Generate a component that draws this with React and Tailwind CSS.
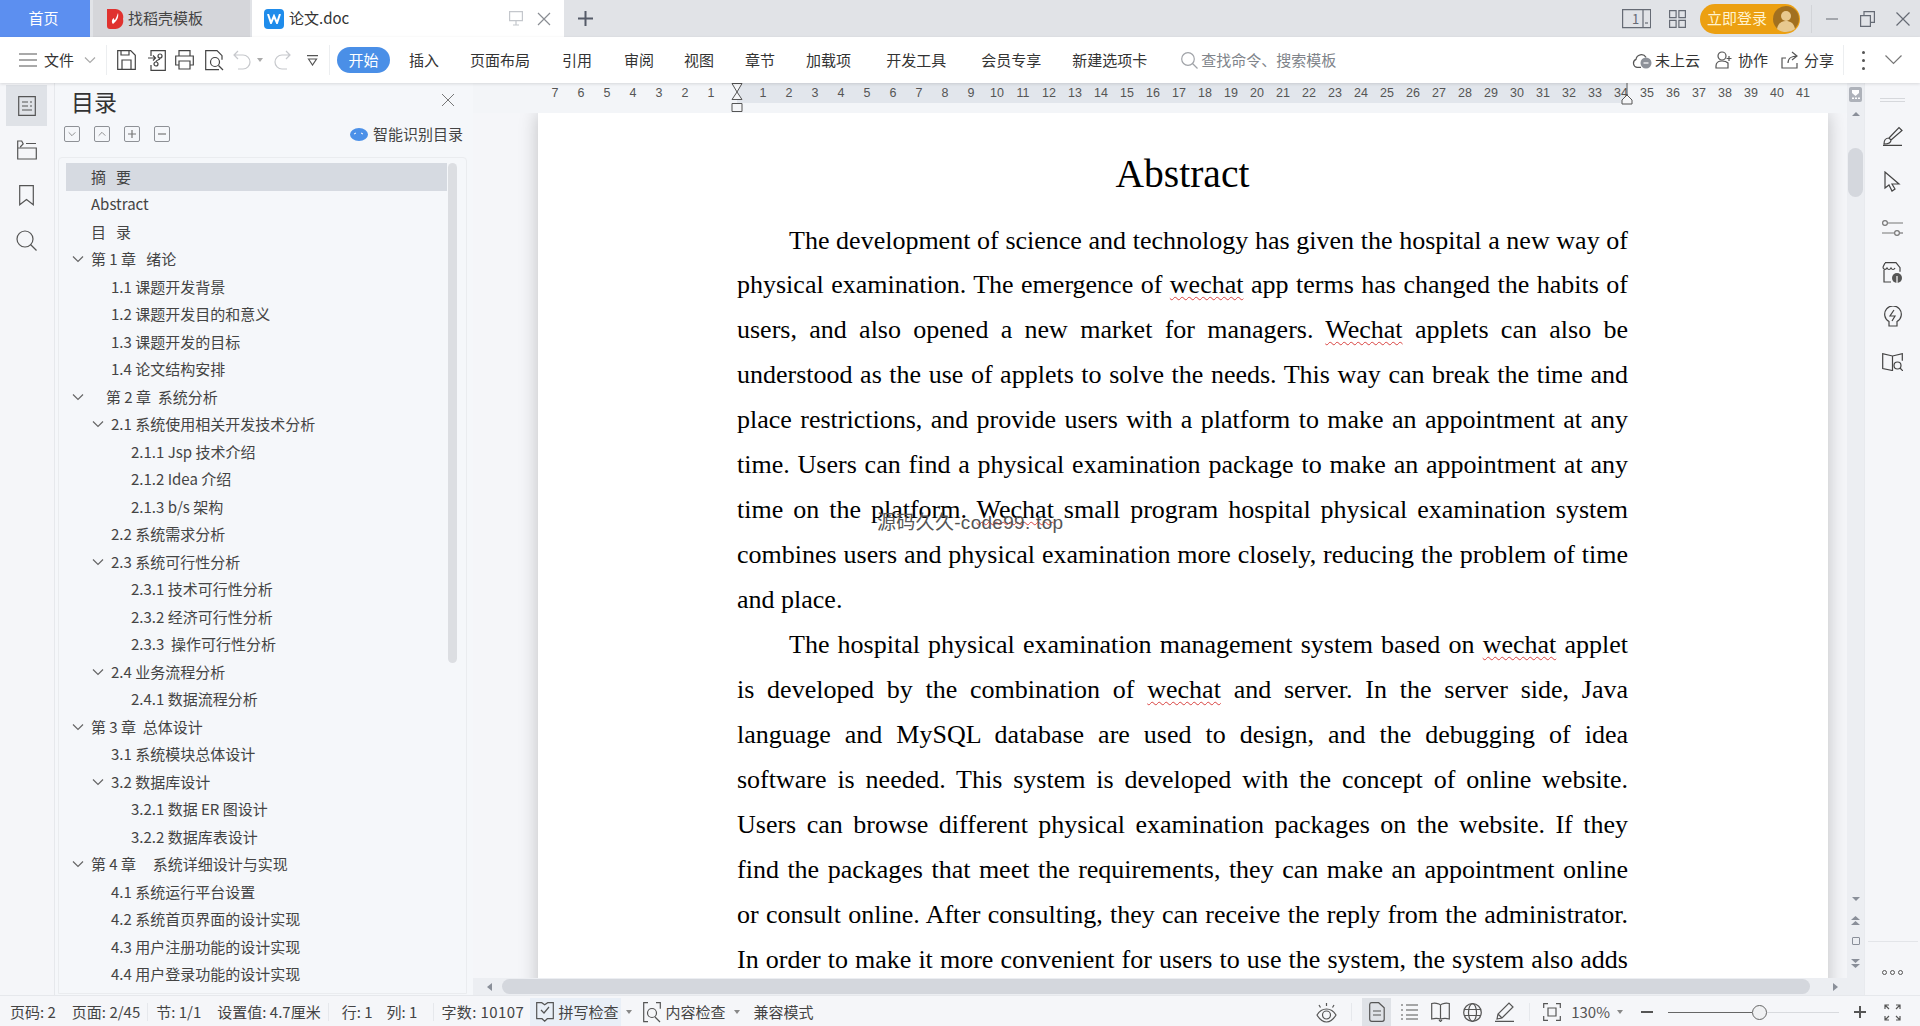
import { Fragment } from 'react';

const tocRows = [
  { t: '摘   要', x: 91, active: true },
  { t: 'Abstract', x: 91 },
  { t: '目   录', x: 91 },
  { t: '第 1 章   绪论', x: 91, c: 78 },
  { t: '1.1 课题开发背景', x: 111 },
  { t: '1.2 课题开发目的和意义', x: 111 },
  { t: '1.3 课题开发的目标', x: 111 },
  { t: '1.4 论文结构安排', x: 111 },
  { t: '第 2 章  系统分析', x: 106, c: 78 },
  { t: '2.1 系统使用相关开发技术分析', x: 111, c: 98 },
  { t: '2.1.1 Jsp 技术介绍', x: 131 },
  { t: '2.1.2 Idea 介绍', x: 131 },
  { t: '2.1.3 b/s 架构', x: 131 },
  { t: '2.2 系统需求分析', x: 111 },
  { t: '2.3 系统可行性分析', x: 111, c: 98 },
  { t: '2.3.1 技术可行性分析', x: 131 },
  { t: '2.3.2 经济可行性分析', x: 131 },
  { t: '2.3.3  操作可行性分析', x: 131 },
  { t: '2.4 业务流程分析', x: 111, c: 98 },
  { t: '2.4.1 数据流程分析', x: 131 },
  { t: '第 3 章  总体设计', x: 91, c: 78 },
  { t: '3.1 系统模块总体设计', x: 111 },
  { t: '3.2 数据库设计', x: 111, c: 98 },
  { t: '3.2.1 数据 ER 图设计', x: 131 },
  { t: '3.2.2 数据库表设计', x: 131 },
  { t: '第 4 章     系统详细设计与实现', x: 91, c: 78 },
  { t: '4.1 系统运行平台设置', x: 111 },
  { t: '4.2 系统首页界面的设计实现', x: 111 },
  { t: '4.3 用户注册功能的设计实现', x: 111 },
  { t: '4.4 用户登录功能的设计实现', x: 111 },
];

const bodyLines = [
  { t: 'The development of science and technology has given the hospital a new way of', indent: true },
  { t: 'physical examination. The emergence of wechat app terms has changed the habits of' },
  { t: 'users, and also opened a new market for managers. Wechat applets can also be' },
  { t: 'understood as the use of applets to solve the needs. This way can break the time and' },
  { t: 'place restrictions, and provide users with a platform to make an appointment at any' },
  { t: 'time. Users can find a physical examination package to make an appointment at any' },
  { t: 'time on the platform. Wechat small program hospital physical examination system' },
  { t: 'combines users and physical examination more closely, reducing the problem of time' },
  { t: 'and place.', last: true },
  { t: 'The hospital physical examination management system based on wechat applet', indent: true },
  { t: 'is developed by the combination of wechat and server. In the server side, Java' },
  { t: 'language and MySQL database are used to design, and the debugging of idea' },
  { t: 'software is needed. This system is developed with the concept of online website.' },
  { t: 'Users can browse different physical examination packages on the website. If they' },
  { t: 'find the packages that meet the requirements, they can make an appointment online' },
  { t: 'or consult online. After consulting, they can receive the reply from the administrator.' },
  { t: 'In order to make it more convenient for users to use the system, the system also adds' },
];

const menuTabs = [
  { t: '插入', cls: 'ml-[19px]' },
  { t: '页面布局', cls: 'ml-[31px]' },
  { t: '引用', cls: 'ml-[32px]' },
  { t: '审阅', cls: 'ml-[32px]' },
  { t: '视图', cls: 'ml-[30px]' },
  { t: '章节', cls: 'ml-[31px]' },
  { t: '加载项', cls: 'ml-[31px]' },
  { t: '开发工具', cls: 'ml-[35px]' },
  { t: '会员专享', cls: 'ml-[35px]' },
  { t: '新建选项卡', cls: 'ml-[31px]' },
];

const rulerNums = [];
for (let n = -7; n <= 41; n++) rulerNums.push(n);

function Ic({ w = 20, h = 20, vb, cls = '', children }) {
  return (
    <svg width={w} height={h} viewBox={vb || `0 0 ${w} ${h}`} fill="none" stroke="currentColor" strokeWidth="1.2" className={'shrink-0 ' + cls}>
      {children}
    </svg>
  );
}

const Chevron = ({ size = 12, cls = '' }) => (
  <Ic w={size} h={size} vb="0 0 12 12" cls={cls}><path d="M1 3.5 6 8.5 11 3.5" /></Ic>
);

function TitleBar() {
  return (
    <div className="flex h-[37px] items-center bg-[#e1e3e7] text-[15px]">
      <div className="flex h-full w-[90px] items-center justify-center bg-[#5c8ff0] pr-[3px] text-white">首页</div>
      <div className="ml-[3px] flex h-full w-[157px] items-center bg-[#d5d6da] pl-[13px] text-[#444]">
        <svg width="18" height="22" viewBox="0 0 18 22" className="shrink-0">
          <path d="M1 1h8a8 8 0 0 1 8 10 8 8 0 0 1-8 10H4a3 3 0 0 1-3-3z" fill="#e0322f" />
          <path d="M12 5c1 4-1 8-5 11-2-2-1-5 1-6 0 1 0 2 1 2 1-2 2-4 3-7z" fill="#fff" />
        </svg>
        <span className="ml-[4px]">找稻壳模板</span>
      </div>
      <div className="ml-[2px] flex h-full w-[312px] items-center bg-white pl-[12px] text-[#333]">
        <div className="flex h-[20px] w-[20px] items-center justify-center rounded-[4px] bg-[#1f8ceb]">
          <svg width="14" height="10" viewBox="0 0 14 10" fill="none" stroke="#fff" strokeWidth="2"><path d="M1 0l3 9 3-7 3 7 3-9" /></svg>
        </div>
        <span className="ml-[5px]">论文.doc</span>
        <Ic w={14} h={15} vb="0 0 14 15" cls="ml-auto text-[#c4c7cc]"><path d="M.6.6h12.8v9H.6zM7 9.6v4M4 14h6" /></Ic>
        <Ic w={14} h={14} vb="0 0 14 14" cls="ml-[14px] mr-[13px] text-[#8a8d93]"><path d="M1 1l12 12M13 1 1 13" /></Ic>
      </div>
      <Ic w={15} h={15} vb="0 0 15 15" cls="ml-[14px] text-[#555b68]"><path d="M7.5 0v15M0 7.5h15" strokeWidth="2" /></Ic>

      <Ic w={29} h={20} vb="0 0 29 20" cls="ml-auto text-[#666b75]"><path d="M.6.6h28v18H.6zM21 .6v18" /><text x="10" y="15" fontSize="13" fill="currentColor" stroke="none">1</text><path d="M23 14h3" /></Ic>
      <Ic w={17} h={20} vb="0 0 17 20" cls="ml-[18px] text-[#666b75]"><path d="M.6 1.6h6.5v7H.6zM9.9 1.6h6.5v7H9.9zM.6 11.4h6.5v7H.6zM9.9 11.4h6.5v7H9.9z" /></Ic>
      <div className="relative ml-[14px] flex h-[30px] w-[100px] items-center rounded-full bg-[#eca012] pl-[7px] text-[#fff3cf]">
        立即登录
        <svg width="26" height="26" viewBox="0 0 26 26" className="ml-auto mr-[1px]">
          <circle cx="13" cy="13" r="13" fill="#a2701f" />
          <circle cx="13" cy="10" r="5" fill="#e8c98f" />
          <path d="M4 23c1-6 5-8 9-8s8 2 9 8c-5 4-13 4-18 0z" fill="#e8c98f" />
        </svg>
      </div>
      <div className="ml-[11px] h-[28px] w-px bg-[#d2d4d8]" />
      <Ic w={12} h={2} vb="0 0 12 2" cls="ml-[14px] text-[#7b7e85]"><path d="M0 1h12" /></Ic>
      <Ic w={15} h={16} vb="0 0 15 16" cls="ml-[22px] text-[#666b75]"><path d="M.6 4.6h9.8v10.8H.6zM4 4.6V.6h10.4v10.8h-4" /></Ic>
      <Ic w={14} h={14} vb="0 0 14 14" cls="ml-[21px] mr-[10px] text-[#666b75]"><path d="M.5.5l13 13M13.5.5l-13 13" /></Ic>
    </div>
  );
}

function Toolbar() {
  return (
    <div className="relative z-10 flex h-[46px] items-center bg-white pl-[19px] text-[15px] text-[#333] shadow-[0_1px_3px_rgba(0,0,0,0.12)]">
      <Ic w={18} h={14} vb="0 0 18 14" cls="text-[#555]"><path d="M0 1h18M0 7h18M0 13h18" /></Ic>
      <span className="ml-[7px]">文件</span>
      <Chevron cls="ml-[10px] text-[#aaa]" />
      <div className="ml-[10px] h-[30px] w-px bg-[#eceef0]" />
      {/* save */}
      <Ic w={19} h={20} vb="0 0 19 20" cls="ml-[10px] text-[#444]"><path d="M.7.7h13l4.6 4.6v14H.7zM5 19V10h9v9M4 1v4h8V1" /></Ic>
      {/* save as */}
      <Ic w={18} h={21} vb="0 0 18 21" cls="ml-[12px] text-[#444]"><path d="M3 6V.7h14.3v19.6H3V15M0 8h7M5 5.5 7.5 8 5 10.5" /><circle cx="12" cy="6" r="2" /><circle cx="8" cy="14" r="2" /><path d="M12 8c0 3-4 1-4 4" /></Ic>
      {/* print */}
      <Ic w={19} h={20} vb="0 0 19 20" cls="ml-[9px] text-[#444]"><path d="M4 6V.7h11V6M4 15H.7V6h17.6v9H15M4 11h11v8H4z" /></Ic>
      {/* preview */}
      <Ic w={19} h={21} vb="0 0 19 21" cls="ml-[11px] text-[#444]"><path d="M14 19.7H.7V.7H12l5 5v4" /><circle cx="10" cy="12" r="4.5" /><path d="M13.5 15.5 18 20" /></Ic>
      {/* undo */}
      <Ic w={18} h={20} vb="0 0 18 20" cls="ml-[9px] text-[#c6c8cc]"><path d="M5 1 1 5l4 4M1 5h9a6.5 6.5 0 0 1 0 14H5" /></Ic>
      <div className="ml-[6px] h-0 w-0 border-x-[3px] border-t-[4px] border-x-transparent border-t-[#aaa]" />
      <Ic w={17} h={20} vb="0 0 17 20" cls="ml-[11px] text-[#c6c8cc]"><path d="M12 1l4 4-4 4M16 5H8a7 7 0 0 0 0 14h5" /></Ic>
      <Ic w={11} h={11} vb="0 0 11 11" cls="ml-[16px] text-[#555]"><path d="M0 .6h11M1.5 4 5.5 10 9.5 4z" /></Ic>
      <div className="ml-[11px] h-[30px] w-px bg-[#eceef0]" />
      <div className="ml-[7px] flex h-[26px] w-[53px] items-center justify-center rounded-full bg-[#4a8fe7] text-white">开始</div>
      {menuTabs.map((tab) => (
        <span key={tab.t} className={tab.cls}>{tab.t}</span>
      ))}
      <Ic w={17} h={17} vb="0 0 17 17" cls="ml-[34px] text-[#a0a3a8]"><circle cx="7" cy="7" r="6.3" /><path d="M11.5 11.5 16.5 16.5" /></Ic>
      <span className="ml-[3px] text-[#80848a]">查找命令、搜索模板</span>

      <Ic w={20} h={18} vb="0 0 20 18" cls="ml-auto text-[#555]"><path d="M9 16.4H5a4.2 4.2 0 0 1-1-8 5.4 5.4 0 0 1 10-2" /><circle cx="14" cy="12" r="5.5" fill="#8d9199" stroke="none" /><path d="M11.5 12h5" stroke="#fff" /></Ic>
      <span className="ml-[3px]">未上云</span>
      <Ic w={18} h={18} vb="0 0 18 18" cls="ml-[15px] text-[#555]"><circle cx="7" cy="5" r="4" /><path d="M1 17v-2c0-3 2-5 6-5s5 1 6 2v5zM14 5v5M11.5 7.5h5" /></Ic>
      <span className="ml-[5px]">协作</span>
      <Ic w={18} h={18} vb="0 0 18 18" cls="ml-[13px] text-[#555]"><path d="M5 7H1v10h15v-5M11 1l5 4-5 4M16 5c-5 0-9 2-9 7" /></Ic>
      <span className="ml-[5px]">分享</span>
      <div className="ml-[9px] h-[30px] w-px bg-[#eceef0]" />
      <div className="ml-[18px] flex flex-col gap-[5px]">
        <div className="h-[3px] w-[3px] rounded-full bg-[#555]" />
        <div className="h-[3px] w-[3px] rounded-full bg-[#555]" />
        <div className="h-[3px] w-[3px] rounded-full bg-[#555]" />
      </div>
      <Ic w={17} h={10} vb="0 0 17 10" cls="ml-[20px] mr-[18px] text-[#777]"><path d="M.5.5l8 8 8-8" /></Ic>
    </div>
  );
}

function Rail() {
  return (
    <div className="flex w-[55px] shrink-0 flex-col items-center border-r border-[#e6e8ec] bg-[#f5f6f9] pr-[1px] text-[#555]">
      <div className="mt-[2px] flex h-[41px] w-[41px] items-center justify-center bg-[#dfe2e7]">
        <Ic w={18} h={20} vb="0 0 18 20"><path d="M.7.7h16.6v18.6H.7zM4 6h6M12 6h2M4 10h6M12 10h2M4 14h10" /></Ic>
      </div>
      <Ic w={20} h={20} vb="0 0 20 20" cls="mt-[14px]"><path d="M.7 8h18.6v11H.7zM.7 8V1l4 0 1.5 3-3 3M9 3.5h10M9 7.5" /></Ic>
      <Ic w={15} h={21} vb="0 0 15 21" cls="mt-[25px]"><path d="M.7.7h13.6v19L7.5 14.5.7 19.7z" /></Ic>
      <Ic w={21} h={21} vb="0 0 21 21" cls="mt-[24px]"><circle cx="9" cy="9" r="8" /><path d="M14.5 14.5 20.5 20.5" /></Ic>
    </div>
  );
}

function OutlinePane() {
  const boxBtn = 'flex h-[16px] w-[16px] items-center justify-center rounded-[2px] border border-[#8e9196] text-[#777]';
  return (
    <div className="flex w-[418px] shrink-0 flex-col bg-[#f5f7fa] pb-[1px] pl-[3px] pr-[6px]">
      <div className="flex h-[34px] items-end pl-[13px]">
        <span className="text-[23px] leading-[31px] text-[#333]">目录</span>
        <Ic w={12} h={12} vb="0 0 12 12" cls="mb-[11px] ml-auto mr-[13px] text-[#777]"><path d="M0 0l12 12M12 0 0 12" strokeWidth="1" /></Ic>
      </div>
      <div className="mt-[5px] flex h-[20px] items-center pl-[6px] pt-[4px]">
        <div className={boxBtn}><Chevron size={8} /></div>
        <div className={'ml-[14px] ' + boxBtn}><Chevron size={8} cls="rotate-180" /></div>
        <div className={'ml-[14px] ' + boxBtn}><Ic w={8} h={8} vb="0 0 8 8"><path d="M4 0v8M0 4h8" /></Ic></div>
        <div className={'ml-[14px] ' + boxBtn}><Ic w={8} h={8} vb="0 0 8 8"><path d="M0 4h8" /></Ic></div>
        <svg width="18" height="13" viewBox="0 0 18 13" className="ml-auto">
          <ellipse cx="9" cy="6.5" rx="9" ry="6.5" fill="#4b90e8" />
          <path d="M4 6l2-1M11 5l2 1" stroke="#fff" strokeWidth="1" />
        </svg>
        <span className="ml-[5px] mr-[4px] text-[15px] text-[#444]">智能识别目录</span>
      </div>
      <div className="mt-[15px] flex min-h-0 flex-1 overflow-hidden rounded-t-[4px] border border-[#eaecef] bg-[#f5f7fa] pl-[7px] pt-[5px]">
        <div className="w-[381px] shrink-0 text-[15px] text-[#444]">
          {tocRows.map((row) => (
            <div key={row.t} className={'flex h-[27.5px] items-center whitespace-pre ' + (row.active ? 'bg-[#d6dae1]' : '')}>
              <Indent row={row} />
              {row.t}
            </div>
          ))}
        </div>
        <div className="ml-[1px] h-[500px] w-[9px] rounded-full bg-[#dcdee2]" />
      </div>
    </div>
  );
}

// row offset inside the list: 66px is the left edge of a row
function Indent({ row }) {
  const pad = row.x - 66;
  if (row.c) {
    return (
      <>
        <div style={{ width: row.c - 66 - 6 }} />
        <Chevron size={12} cls="text-[#666]" />
        <div style={{ width: pad - (row.c - 66 + 6) }} />
      </>
    );
  }
  return <div style={{ width: pad }} />;
}

function Ruler() {
  return (
    <div className="flex h-[30px] shrink-0 items-start bg-[#f3f5f8] pl-[69px]">
      {rulerNums.map((n) => (
        <div
          key={n}
          className={
            'relative flex h-[20px] w-[26px] shrink-0 items-center justify-center font-["Liberation_Sans",sans-serif] text-[12.5px] text-[#555] ' +
            (n > 0 && n < 34 ? 'bg-[#e2e6ec] ' : '') +
            (n === 34 ? 'bg-linear-to-r from-[#e2e6ec] from-70% to-transparent to-70% ' : '') +
            (n === 0 ? 'bg-linear-to-r from-transparent from-50% to-[#e2e6ec] to-50%' : '')
          }
        >
          {n !== 0 && Math.abs(n)}
          {n === 0 && (
            <svg width="12" height="30" viewBox="0 0 12 30" fill="#f5f6f8" stroke="#555" className="absolute left-[7px] top-0">
              <path d="M1 .5h10L6 9zM6 9l5 7.5H1zM1 20.5h10v8H1z" />
            </svg>
          )}
          {n === 34 && (
            <svg width="12" height="22" viewBox="0 0 12 22" fill="#f5f6f8" stroke="#555" className="absolute left-[13px] top-0">
              <path d="M6 0v13M6 12l5 5v4H1v-4z" />
            </svg>
          )}
        </div>
      ))}
    </div>
  );
}

function Line({ line }) {
  const parts = line.t.split(/(wechat)/i);
  return (
    <div
      className={
        'whitespace-pre-wrap ' +
        (line.last ? '' : '[text-align-last:justify] ') +
        (line.indent ? 'pl-[52px]' : '')
      }
    >
      {parts.map((p, i) =>
        /^wechat$/i.test(p) ? (
          <span key={i} className="underline decoration-[#d8413f] decoration-wavy decoration-1 underline-offset-[3px]">{p}</span>
        ) : (
          <Fragment key={i}>{p}</Fragment>
        )
      )}
    </div>
  );
}

function Page() {
  return (
    <div className="relative ml-[65px] h-[900px] w-[1290px] shrink-0 bg-white pl-[199px] pr-[200px] font-['Liberation_Serif',serif] text-black shadow-[0_0_18px_rgba(0,0,0,0.22)]">
      <h1 className="pt-[38px] text-center text-[39.5px] leading-[46px]">Abstract</h1>
      <div className="mt-[21.5px] text-[26px] leading-[44.93px]">
        {bodyLines.map((line, i) => (
          <Line key={i} line={line} />
        ))}
      </div>
      <div className="absolute left-[339px] top-[398px] font-['Liberation_Sans','Noto_Sans_CJK_SC',sans-serif] text-[19px] leading-[24px] tracking-[0.3px] text-[#555]">
        源码久久-code99. top
      </div>
    </div>
  );
}

function HScroll() {
  return (
    <div className="flex h-[17px] shrink-0 items-center bg-[#eceef2] pl-[14px]">
      <div className="h-0 w-0 border-y-[4px] border-r-[5px] border-y-transparent border-r-[#8a8f99]" />
      <div className="ml-[10px] h-[15px] w-[1308px] rounded-full bg-[#d4d7dd]" />
      <div className="ml-[23px] h-0 w-0 border-y-[4px] border-l-[5px] border-y-transparent border-l-[#8a8f99]" />
    </div>
  );
}

function VScroll() {
  return (
    <div className="flex w-[17px] shrink-0 flex-col items-center bg-[#eceef2] pt-[4px]">
      <svg width="13" height="15" viewBox="0 0 13 15">
        <rect width="13" height="15" rx="2" fill="#aeb2ba" />
        <path d="M3 3h7v3l-3.500 3-3.500-3z" fill="#fff" />
        <path d="M3 12v-1.500h2V12zM6 12v-1.500h2V12zM9 12v-1.500h2V12z" fill="#fff" />
      </svg>
      <div className="mt-[10px] h-0 w-0 border-x-[4px] border-b-[4px] border-x-transparent border-b-[#8a8f99]" />
      <div className="mt-[32px] h-[49px] w-[15px] rounded-full bg-[#d4d7dd]" />
      <div className="mt-auto h-0 w-0 border-x-[4px] border-t-[4px] border-x-transparent border-t-[#8a8f99]" />
      <Ic w={9} h={10} vb="0 0 9 10" cls="mt-[15px] text-[#8a8f99]"><path d="M4.500 0 9 4H0zM4.500 5 9 9H0z" fill="currentColor" stroke="none" /></Ic>
      <div className="mt-[11px] h-[8px] w-[8px] rounded-[1px] border border-[#8a8f99]" />
      <Ic w={9} h={10} vb="0 0 9 10" cls="mt-[13px] mb-[27px] text-[#8a8f99]"><path d="M0 1h9L4.500 5zM0 6h9L4.500 10z" fill="currentColor" stroke="none" /></Ic>
    </div>
  );
}

function RightPanel() {
  return (
    <div className="flex w-[56px] shrink-0 flex-col items-center border-l border-[#e8eaee] bg-[#f5f6f9] text-[#444]">
      <div className="mt-[15px] h-[4px] w-[25px] border-y border-[#d6d8dc]" />
      <Ic w={20} h={20} vb="0 0 20 20" cls="mt-[24px]"><path d="M0 19.400h19M1 18c0-4 2-6 5-6l2 2c0 3-3 4-7 4zM6 12 16 1.500l3 3L8 14" /></Ic>
      <Ic w={17} h={21} vb="0 0 17 21" cls="mt-[25px]"><path d="M1 1v16l4-3 3 6 3-2-3-5h7z" /></Ic>
      <Ic w={21} h={16} vb="0 0 21 16" cls="mt-[28px] text-[#777]"><circle cx="3" cy="3" r="2.400" /><path d="M6 3h15M0 13h12" /><circle cx="15" cy="13" r="2.400" /><path d="M18 13h3" /></Ic>
      <Ic w={21} h={22} vb="0 0 21 22" cls="mt-[26px]"><path d="M3 0.700h11l4 5v4M1 5l2-4M1 5c0 3 3 3 4 1 1 2 3 2 4 0 1 2 3 2 4 0M2 8v12h7" /><circle cx="15" cy="16" r="5" fill="#555" stroke="none" /><path d="M15 21v-7" stroke="#fff" /></Ic>
      <Ic w={18} h={21} vb="0 0 18 21" cls="mt-[22px]"><path d="M5 15.500a8.300 8.300 0 1 1 8 0V20H5z" /><path d="M10 4 6 10h5l-3 5" /></Ic>
      <Ic w={21} h={18} vb="0 0 21 18" cls="mt-[26px]"><path d="M10.500 3 .7.700v14.800l9.800 2V3zM10.500 3 20.300.7v7" /><circle cx="15.500" cy="12.500" r="3.500" /><path d="M18 15l3 3" /></Ic>
      <div className="mt-auto h-px w-[50px] bg-[#e3e5e9]" />
      <div className="mb-[20px] mt-[28px] flex gap-[3px]">
        <div className="h-[5px] w-[5px] rounded-full border border-[#555]" />
        <div className="h-[5px] w-[5px] rounded-full border border-[#555]" />
        <div className="h-[5px] w-[5px] rounded-full border border-[#555]" />
      </div>
    </div>
  );
}

function StatusBar() {
  const sep = 'h-[18px] w-px bg-[#e6e8ec]';
  return (
    <div className="flex h-[31px] shrink-0 items-center whitespace-nowrap border-t border-[#e6e8ec] bg-[#f5f6f9] pl-[10px] pt-[2px] text-[15px] text-[#444]">
      <span>页码: 2</span>
      <span className="ml-[16px]">页面: 2/45</span>
      <div className={'ml-[7px] ' + sep} />
      <span className="ml-[8px]">节: 1/1</span>
      <span className="ml-[16px]">设置值: 4.7厘米</span>
      <div className={'ml-[7px] ' + sep} />
      <span className="ml-[13px]">行: 1</span>
      <span className="ml-[14px]">列: 1</span>
      <div className={'ml-[16px] ' + sep} />
      <span className="ml-[7px] w-[89px] tracking-[0.4px]">字数: 10107</span>
      <div className="flex h-full w-[91px] items-center bg-[#e9eff7] pl-[6px]">
        <Ic w={18} h={20} vb="0 0 18 20" cls="text-[#555]"><path d="M.7.7h5l3 2 3-2h5.600v16h-6l-2.600 2.500L6 16.700H.7zM5 8l3 3 5-6" /></Ic>
        <span className="ml-[4px]">拼写检查</span>
      </div>
      <div className="ml-[5px] h-0 w-0 border-x-[3px] border-t-[4px] border-x-transparent border-t-[#888]" />
      <Ic w={18} h={21} vb="0 0 18 21" cls="ml-[11px] text-[#555]"><path d="M5 .7H.7v19H5M13 .7h4.300v6" /><circle cx="9" cy="11" r="4.500" /><path d="M12 15l5 5" /></Ic>
      <span className="ml-[4px]">内容检查</span>
      <div className="ml-[9px] h-0 w-0 border-x-[3px] border-t-[4px] border-x-transparent border-t-[#888]" />
      <span className="ml-[13px]">兼容模式</span>

      <Ic w={21} h={21} vb="0 0 21 21" cls="ml-auto text-[#555]"><path d="M1 13c3-5 6-6 9.500-6s6.500 1 9.500 6c-3 5-6 7-9.500 7S4 18 1 13z" /><circle cx="10.500" cy="13" r="4" /><path d="M10.500 1v3M3 3l1.500 2.500M18 3l-1.500 2.500" /></Ic>
      <div className={'ml-[14px] ' + sep} />
      <div className="ml-[10px] flex h-full w-[29px] items-center justify-center bg-[#dfe2e7]">
        <Ic w={16} h={20} vb="0 0 16 20" cls="text-[#555]"><path d="M.7 2.500a2 2 0 0 1 2-1.800h7l5.500 5v11.600a2 2 0 0 1-2 2H2.700a2 2 0 0 1-2-2zM4 9h8M4 13h8" /></Ic>
      </div>
      <Ic w={17} h={16} vb="0 0 17 16" cls="ml-[10px] text-[#555]"><path d="M0 1h2M5 1h12M0 6h2M5 6h12M0 11h2M5 11h12M0 15h2M5 15h12" /></Ic>
      <Ic w={19} h={20} vb="0 0 19 20" cls="ml-[13px] text-[#555]"><path d="M9.500 3C8 1 3 1 .7 1.500V17c2-.5 7-.5 8.800 0 2-.5 7-.5 8.800 0V1.500C16 1 11 1 9.500 3zM9.500 3v14M8 18l1.500 1.500L11 18" /></Ic>
      <Ic w={19} h={19} vb="0 0 19 19" cls="ml-[13px] text-[#555]"><circle cx="9.500" cy="9.500" r="8.800" /><ellipse cx="9.500" cy="9.500" rx="4" ry="8.800" /><path d="M1 6.500h17M1 12.500h17" /></Ic>
      <Ic w={20} h={20} vb="0 0 20 20" cls="ml-[13px] text-[#555]"><path d="M0 19.300h19M2 17l1-5L14 1l4 4L7 16zM3 12l4 4" /></Ic>
      <div className={'ml-[14px] ' + sep} />
      <Ic w={18} h={18} vb="0 0 18 18" cls="ml-[13px] text-[#555]"><path d="M5 .7H.7V5M13 .7h4.300V5M5 17.300H.7V13M13 17.300h4.300V13M5 5h8v8H5z" /></Ic>
      <span className="ml-[10px] text-[#555]">130%</span>
      <div className="ml-[7px] h-0 w-0 border-x-[3px] border-t-[4px] border-x-transparent border-t-[#888]" />
      <div className="ml-[18px] h-[2px] w-[12px] bg-[#555]" />
      <div className="ml-[15px] h-px w-[84px] bg-[#666]" />
      <div className="h-[15px] w-[15px] shrink-0 rounded-full border border-[#666] bg-[#f0f1f3]" />
      <div className="h-px w-[72px] bg-[#d8dade]" />
      <Ic w={12} h={12} vb="0 0 12 12" cls="ml-[15px] text-[#555]"><path d="M6 0v12M0 6h12" strokeWidth="2" /></Ic>
      <Ic w={17} h={17} vb="0 0 17 17" cls="ml-[18px] mr-[19px] text-[#555]"><path d="M1 5V1h4M1 1l4 4M16 5V1h-4M16 1l-4 4M1 12v4h4M1 16l4-4M16 12v4h-4M16 16l-4-4" /></Ic>
    </div>
  );
}

export default function App() {
  return (
    <div className="flex h-screen w-[1920px] flex-col overflow-hidden bg-[#f5f6f9] font-['Noto_Sans_CJK_SC','Noto_Sans',sans-serif]">
      <TitleBar />
      <Toolbar />
      <div className="flex min-h-0 flex-1">
        <Rail />
        <OutlinePane />
        <div className="flex min-w-0 flex-1 flex-col">
          <Ruler />
          <div className="flex min-h-0 flex-1 items-start overflow-hidden bg-[#f5f6f9]">
            <Page />
          </div>
          <HScroll />
        </div>
        <VScroll />
        <RightPanel />
      </div>
      <StatusBar />
    </div>
  );
}
